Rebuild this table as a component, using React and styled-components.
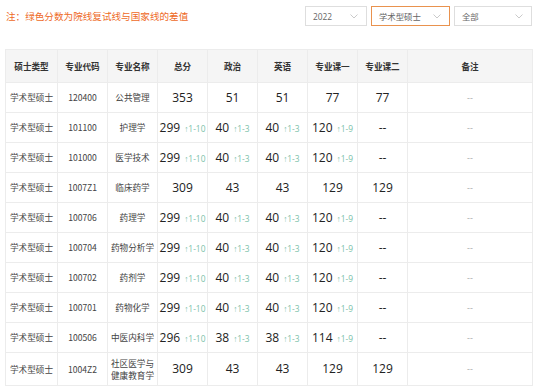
import React from 'react'
import styled, { createGlobalStyle } from 'styled-components'

const GlobalStyle = createGlobalStyle`
  body {
    margin: 0;
    background: #fff;
    font-family: "Noto Sans CJK SC", "Noto Sans", sans-serif;
    color: #333;
  }
`

const Page = styled.div`
  width: 539px;
  padding: 6px 6px 0 5px;
  box-sizing: border-box;
`

const TopBar = styled.div`
  display: flex;
  align-items: center;
  justify-content: space-between;
  height: 20px;
  margin-bottom: 23px;
`

const Note = styled.div`
  color: #ee6a1f;
  font-size: 9.6px;
  line-height: 20px;
  padding-left: 1px;
`

const Filters = styled.div`
  display: flex;
  gap: 4px;
  padding-right: 1px;
`

const SelectBox = styled.div`
  display: flex;
  align-items: center;
  justify-content: space-between;
  box-sizing: border-box;
  width: ${({ $w }) => $w}px;
  height: 20px;
  padding: 0 8px 0 7px;
  border: 1px solid ${({ $active }) => ($active ? '#e9924e' : '#dedede')};
  font-family: "Open Sans", "Noto Sans CJK SC", sans-serif;
  font-size: 8.4px;
  color: #666;
  background: #fff;
`

const Table = styled.table`
  width: 527px;
  border-collapse: collapse;
  table-layout: fixed;
`

const HeadCell = styled.th`
  height: 32px;
  padding: 0;
  background: #f5f5f5;
  border: 1px solid #ececec;
  font-size: 8.6px;
  font-weight: 700;
  color: #333;
  text-align: center;
`

const Cell = styled.td`
  height: ${({ $tall }) => ($tall ? '32px' : '29px')};
  padding: 0;
  border: 1px solid #ececec;
  text-align: center;
  font-family: ${({ $big }) => ($big ? '"Open Sans", "Noto Sans", sans-serif' : 'inherit')};
  font-size: ${({ $big }) => ($big ? '12px' : '8.6px')};
  font-weight: 400;
  color: ${({ $big }) => ($big ? '#222' : '#444')};
  line-height: 1.45;
  white-space: nowrap;
`

const Diff = styled.span`
  margin-left: 4px;
  font-size: 8.4px;
  color: #7cbfa9;
`

const Dash = styled.span`
  font-family: "Open Sans", sans-serif;
  font-size: 9px;
  color: #aaa;
`

const Chevron = () => (
  <svg width="8" height="5" viewBox="0 0 8 5">
    <path d="M0.5 0.5 L4 4 L7.5 0.5" fill="none" stroke="#bdbdbd" strokeWidth="0.8" />
  </svg>
)

const widths = [52, 50, 50, 50, 50, 50, 50, 50, 125]
const heads = ['硕士类型', '专业代码', '专业名称', '总分', '政治', '英语', '专业课一', '专业课二', '备注']

const rows = [
  ['120400', '公共管理', ['353'], ['51'], ['51'], ['77'], '77'],
  ['101100', '护理学', ['299', '1-10'], ['40', '1-3'], ['40', '1-3'], ['120', '1-9'], '--'],
  ['101000', '医学技术', ['299', '1-10'], ['40', '1-3'], ['40', '1-3'], ['120', '1-9'], '--'],
  ['1007Z1', '临床药学', ['309'], ['43'], ['43'], ['129'], '129'],
  ['100706', '药理学', ['299', '1-10'], ['40', '1-3'], ['40', '1-3'], ['120', '1-9'], '--'],
  ['100704', '药物分析学', ['299', '1-10'], ['40', '1-3'], ['40', '1-3'], ['120', '1-9'], '--'],
  ['100702', '药剂学', ['299', '1-10'], ['40', '1-3'], ['40', '1-3'], ['120', '1-9'], '--'],
  ['100701', '药物化学', ['299', '1-10'], ['40', '1-3'], ['40', '1-3'], ['120', '1-9'], '--'],
  ['100506', '中医内科学', ['296', '1-10'], ['38', '1-3'], ['38', '1-3'], ['114', '1-9'], '--'],
  ['1004Z2', ['社区医学与', '健康教育学'], ['309'], ['43'], ['43'], ['129'], '129'],
]

const Score = ({ v, tall }) => (
  <Cell $big $tall={tall}>
    {v[0]}
    {v[1] && <Diff>↑{v[1]}</Diff>}
  </Cell>
)

export default function App() {
  return (
    <Page>
      <GlobalStyle />
      <TopBar>
        <Note>注：绿色分数为院线复试线与国家线的差值</Note>
        <Filters>
          <SelectBox $w={62}>2022<Chevron /></SelectBox>
          <SelectBox $w={79} $active>学术型硕士<Chevron /></SelectBox>
          <SelectBox $w={78}>全部<Chevron /></SelectBox>
        </Filters>
      </TopBar>
      <Table>
        <colgroup>
          {widths.map((w, i) => <col key={i} style={{ width: w }} />)}
        </colgroup>
        <thead>
          <tr>{heads.map((h) => <HeadCell key={h}>{h}</HeadCell>)}</tr>
        </thead>
        <tbody>
          {rows.map((r, i) => {
            const tall = Array.isArray(r[1])
            return (
              <tr key={i}>
                <Cell $tall={tall}>学术型硕士</Cell>
                <Cell $tall={tall}>{r[0]}</Cell>
                <Cell $tall={tall}>{tall ? <>{r[1][0]}<br />{r[1][1]}</> : r[1]}</Cell>
                <Score v={r[2]} tall={tall} />
                <Score v={r[3]} tall={tall} />
                <Score v={r[4]} tall={tall} />
                <Score v={r[5]} tall={tall} />
                <Cell $big $tall={tall}>{r[6]}</Cell>
                <Cell $tall={tall}><Dash>--</Dash></Cell>
              </tr>
            )
          })}
        </tbody>
      </Table>
    </Page>
  )
}
